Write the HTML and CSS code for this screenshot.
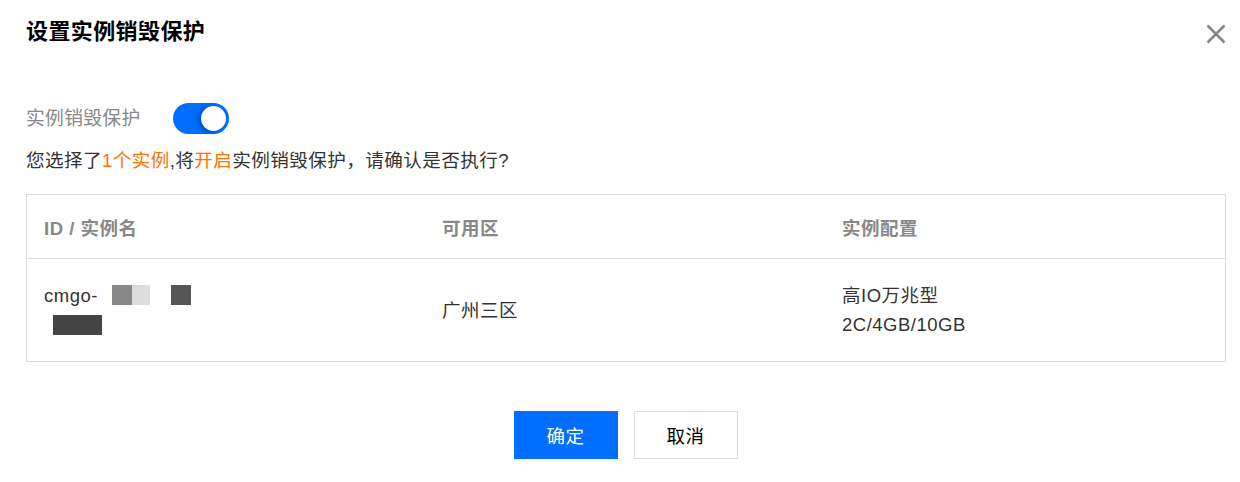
FILE: index.html
```html
<!DOCTYPE html>
<html lang="zh">
<head>
<meta charset="utf-8">
<link rel="stylesheet" href="styles.css">
</head>
<body>
<div class="dialog">
  <div class="header">
    <h1 class="title">设置实例销毁保护</h1>
    <svg class="close" width="20" height="20" viewBox="0 0 20 20"><path d="M1.5 1.5 L18.5 18.5 M18.5 1.5 L1.5 18.5" stroke="#888" stroke-width="2.6" fill="none"/></svg>
  </div>
  <div class="switch-row">
    <span class="switch-label">实例销毁保护</span>
    <span class="switch"><span class="knob"></span></span>
  </div>
  <p class="confirm">您选择了<span class="hl">1个实例</span>,将<span class="hl">开启</span>实例销毁保护，请确认是否执行?</p>
  <div class="table">
    <div class="row head">
      <div class="cell">ID / 实例名</div>
      <div class="cell">可用区</div>
      <div class="cell">实例配置</div>
    </div>
    <div class="row body">
      <div class="cell id-cell">
        <div class="line1">cmgo-<span class="mask m1"></span><span class="mask m2"></span><span class="mask m3"></span></div>
        <div class="line2"><span class="mask m4"></span></div>
      </div>
      <div class="cell">广州三区</div>
      <div class="cell">高IO万兆型<br>2C/4GB/10GB</div>
    </div>
  </div>
  <div class="footer">
    <button class="btn primary">确定</button>
    <button class="btn">取消</button>
  </div>
</div>
</body>
</html>
```
FILE: styles.css
```css
* { box-sizing: border-box; }
html, body { margin: 0; padding: 0; background: #fff; }
body {
  font-family: "Liberation Sans", "Noto Sans CJK SC", sans-serif;
  color: #333;
  width: 1240px;
  height: 482px;
  overflow: hidden;
}
.dialog { padding: 0 14px 0 26px; }
.header {
  display: flex;
  justify-content: space-between;
  align-items: center;
  height: 67px;
}
.title {
  margin: 0;
  font-size: 22px;
  font-weight: 700;
  color: #000;
  line-height: 1;
  padding-bottom: 4px;
  letter-spacing: 0.4px;
}
.switch-row {
  display: flex;
  align-items: center;
  margin-top: 35px;
  height: 32px;
}
.switch-label {
  font-size: 18.8px;
  color: #888;
  width: 147px;
  padding-bottom: 4px;
  letter-spacing: 0.3px;
}
.switch {
  width: 56px;
  height: 31px;
  border-radius: 16px;
  background: #006eff;
  position: relative;
  display: inline-block;
}
.knob {
  position: absolute;
  right: 3px;
  top: 3px;
  width: 25px;
  height: 25px;
  border-radius: 50%;
  background: #fff;
  box-shadow: -3px 1px 5px rgba(0, 40, 120, 0.45);
}
.confirm {
  margin: 14px 0 0;
  font-size: 18.6px;
  line-height: 26px;
  color: #333;
  letter-spacing: 0.4px;
}
.hl { color: #ff7200; }
.table {
  margin-top: 20px;
  border: 1px solid #ddd;
  width: 1200px;
}
.row {
  display: grid;
  grid-template-columns: 398px 400px 1fr;
}
.row.head {
  height: 64px;
  border-bottom: 1px solid #ddd;
  align-items: center;
}
.row.head .cell {
  font-weight: 700;
  color: #888;
  font-size: 18.5px;
  letter-spacing: 0.5px;
}
.cell { padding-left: 17px; }
.row.body {
  height: 102px;
  align-items: center;
  font-size: 18.5px;
  line-height: 29px;
  color: #333;
  letter-spacing: 0.5px;
}
.id-cell { padding-top: 4px; }
.line1 { display: flex; align-items: center; height: 26px; }
.line2 { display: flex; align-items: center; height: 34px; padding-left: 9px; }
.mask { display: inline-block; height: 20px; }
.m1 { width: 20px; background: #888; margin-left: 14px; }
.m2 { width: 18px; background: #ddd; }
.m3 { width: 20px; background: #555; margin-left: 21px; }
.m4 { width: 49px; height: 20px; background: #444; }
.footer {
  display: flex;
  justify-content: center;
  gap: 16px;
  margin-top: 49px;
  padding-right: 1px;
}
.btn {
  width: 104px;
  height: 48px;
  font-family: inherit;
  font-size: 18.5px;
  border: 1px solid #ddd;
  background: #fff;
  color: #000;
  padding: 0;
  cursor: pointer;
  letter-spacing: 0.4px;
}
.btn.primary {
  background: #006eff;
  border-color: #006eff;
  color: #fff;
}
```
